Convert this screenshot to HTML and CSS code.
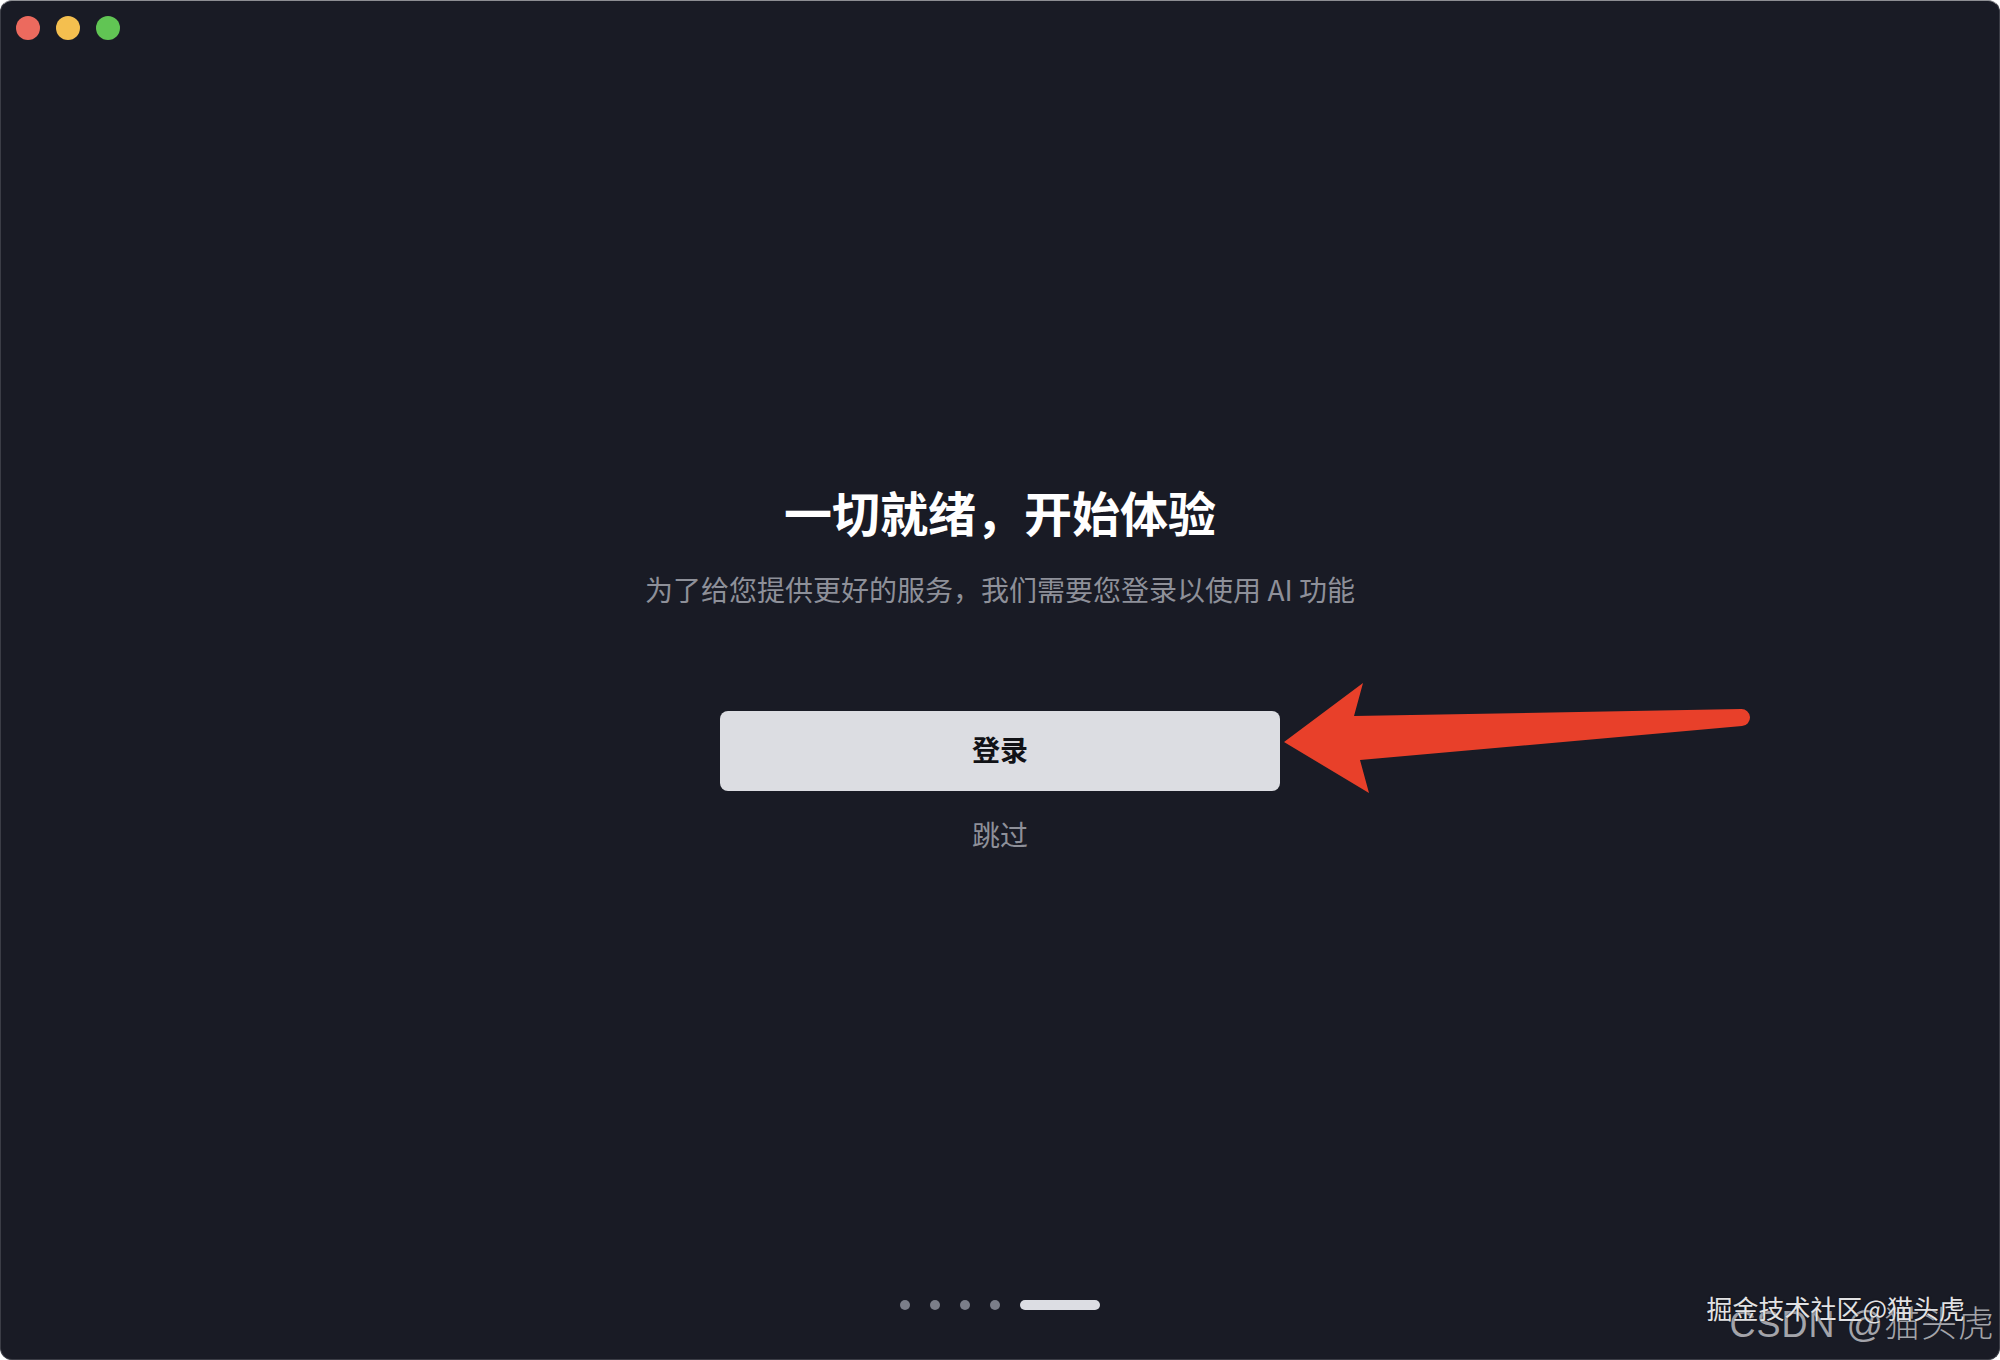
FILE: index.html
```html
<!DOCTYPE html>
<html lang="zh-CN">
<head>
<meta charset="utf-8">
<title>一切就绪</title>
<link rel="stylesheet" href="styles.css">
</head>
<body>
<div class="window">
  <div class="titlebar">
    <span class="light red"></span>
    <span class="light yellow"></span>
    <span class="light green"></span>
  </div>
  <main class="content">
    <h1 class="title">一切就绪，开始体验</h1>
    <p class="subtitle">为了给您提供更好的服务，我们需要您登录以使用 AI 功能</p>
    <button class="login">登录</button>
    <a class="skip">跳过</a>
  </main>
  <div class="pager">
    <span class="dot"></span>
    <span class="dot"></span>
    <span class="dot"></span>
    <span class="dot"></span>
    <span class="bar"></span>
  </div>
  <svg class="arrow" viewBox="0 0 2000 1360" width="2000" height="1360">
    <path d="M1284 742 L1363 683 L1354 716 L1741 709 A8.5 8.5 0 0 1 1742 726 L1360 760 L1369 793 Z" fill="#e8402a"/>
  </svg>
  <div class="watermark">
    <span class="wm-csdn">CSDN @猫头虎</span>
    <span class="wm-juejin">掘金技术社区@猫头虎</span>
  </div>
</div>
</body>
</html>
```
FILE: styles.css
```css
html, body {
  margin: 0;
  padding: 0;
  background: #ffffff;
}
body {
  width: 2000px;
  height: 1360px;
  overflow: hidden;
  font-family: "Noto Sans CJK SC", "Noto Sans", sans-serif;
}
.window {
  position: relative;
  box-sizing: border-box;
  width: 2000px;
  height: 1360px;
  background: #191b25;
  border: 1px solid #3b3d46;
  border-top-color: #8d8e93;
  border-radius: 12px;
  display: flex;
  flex-direction: column;
  overflow: hidden;
}
.titlebar {
  height: 56px;
  box-sizing: border-box;
  padding: 15px 15px 0;
  display: flex;
  gap: 16px;
  flex: none;
}
.light {
  width: 24px;
  height: 24px;
  border-radius: 50%;
}
.red { background: #ec6a5e; }
.yellow { background: #f4bf4f; }
.green { background: #61c554; }
.content {
  flex: 1;
  display: flex;
  flex-direction: column;
  align-items: center;
  padding-top: 422px;
}
.title {
  margin: 0;
  font-size: 48px;
  line-height: 64px;
  font-weight: 700;
  color: #ffffff;
}
.subtitle {
  margin: 26px 0 0;
  font-size: 28px;
  line-height: 40px;
  color: #8e9099;
}
.login {
  margin-top: 102px;
  width: 560px;
  height: 80px;
  box-sizing: border-box;
  padding: 0 0 4px;
  border: none;
  border-radius: 8px;
  background: #dcdde2;
  color: #111216;
  font-family: inherit;
  font-size: 28px;
  font-weight: 700;
}
.skip {
  margin-top: 23px;
  font-size: 28px;
  line-height: 40px;
  color: #8e9099;
}
.pager {
  flex: none;
  display: flex;
  justify-content: center;
  align-items: center;
  gap: 20px;
  padding-bottom: 49px;
}
.dot {
  width: 10px;
  height: 10px;
  border-radius: 50%;
  background: #7b7e89;
}
.bar {
  width: 80px;
  height: 10px;
  border-radius: 5px;
  background: #dcdde3;
}
.arrow {
  position: absolute;
  left: -1px;
  top: -1px;
  pointer-events: none;
}
.watermark {
  position: absolute;
  right: 4px;
  bottom: 14px;
  width: 300px;
  height: 50px;
}
.wm-csdn {
  position: absolute;
  right: 0;
  top: 12px;
  font-family: "Liberation Sans", "Noto Sans CJK SC", sans-serif;
  font-size: 36px;
  line-height: 36px;
  font-weight: 300;
  letter-spacing: 1px;
  color: rgba(210, 210, 215, 0.75);
  white-space: nowrap;
}
.wm-juejin {
  position: absolute;
  right: 30px;
  top: 0;
  font-size: 26px;
  line-height: 26px;
  color: #e2e2e4;
  text-shadow: 0 0 2px rgba(0, 0, 0, 0.6);
  white-space: nowrap;
}
```
